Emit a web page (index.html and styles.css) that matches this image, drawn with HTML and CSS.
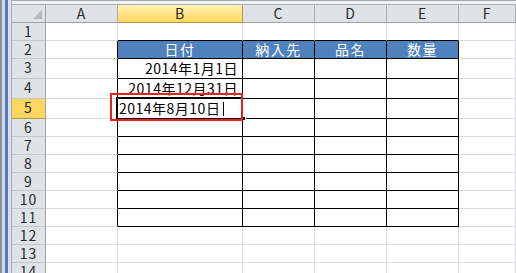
FILE: index.html
```html
<!DOCTYPE html>
<html lang="ja">
<head>
    <meta charset="UTF-8">
    <title>日付の入力</title>
    <link rel="stylesheet" href="styles.css">
</head>
<body>
    <div class="window">
        <div class="frame"></div>
        <div class="sheet">
            <div class="topbar"></div>

            <!-- 列見出し -->
            <div class="row head">
                <div class="corner"></div>
                <div class="ch">A</div>
                <div class="ch sel">B</div>
                <div class="ch">C</div>
                <div class="ch">D</div>
                <div class="ch">E</div>
                <div class="ch">F</div>
            </div>

            <div class="row">
                <div class="rh">1</div>
                <div class="c"></div>
                <div class="c tt"></div>
                <div class="c tt"></div>
                <div class="c tt"></div>
                <div class="c tt"></div>
                <div class="c"></div>
            </div>

            <!-- 表の見出し -->
            <div class="row">
                <div class="rh">2</div>
                <div class="c tl"></div>
                <div class="c t th">日付</div>
                <div class="c t th">納入先</div>
                <div class="c t th">品名</div>
                <div class="c t th">数量</div>
                <div class="c"></div>
            </div>

            <div class="row">
                <div class="rh">3</div>
                <div class="c tl"></div>
                <div class="c t num">2014年1月1日</div>
                <div class="c t"></div>
                <div class="c t"></div>
                <div class="c t"></div>
                <div class="c"></div>
            </div>

            <div class="row">
                <div class="rh">4</div>
                <div class="c tl"></div>
                <div class="c t num">2014年12月31日</div>
                <div class="c t"></div>
                <div class="c t"></div>
                <div class="c t"></div>
                <div class="c"></div>
            </div>

            <!-- 入力中のセル -->
            <div class="row">
                <div class="rh sel">5</div>
                <div class="c tl"></div>
                <div class="c t editing">
                    <span class="edit-text">2014年8月10日</span><span class="caret"></span>
                    <span class="active"></span>
                    <span class="handle"></span>
                    <span class="mark"></span>
                </div>
                <div class="c t"></div>
                <div class="c t"></div>
                <div class="c t"></div>
                <div class="c"></div>
            </div>

            <div class="row">
                <div class="rh">6</div>
                <div class="c tl"></div>
                <div class="c t"></div>
                <div class="c t"></div>
                <div class="c t"></div>
                <div class="c t"></div>
                <div class="c"></div>
            </div>

            <div class="row">
                <div class="rh">7</div>
                <div class="c tl"></div>
                <div class="c t"></div>
                <div class="c t"></div>
                <div class="c t"></div>
                <div class="c t"></div>
                <div class="c"></div>
            </div>

            <div class="row">
                <div class="rh">8</div>
                <div class="c tl"></div>
                <div class="c t"></div>
                <div class="c t"></div>
                <div class="c t"></div>
                <div class="c t"></div>
                <div class="c"></div>
            </div>

            <div class="row">
                <div class="rh">9</div>
                <div class="c tl"></div>
                <div class="c t"></div>
                <div class="c t"></div>
                <div class="c t"></div>
                <div class="c t"></div>
                <div class="c"></div>
            </div>

            <div class="row">
                <div class="rh">10</div>
                <div class="c tl"></div>
                <div class="c t"></div>
                <div class="c t"></div>
                <div class="c t"></div>
                <div class="c t"></div>
                <div class="c"></div>
            </div>

            <div class="row">
                <div class="rh">11</div>
                <div class="c tl"></div>
                <div class="c t"></div>
                <div class="c t"></div>
                <div class="c t"></div>
                <div class="c t"></div>
                <div class="c"></div>
            </div>

            <div class="row">
                <div class="rh">12</div>
                <div class="c"></div>
                <div class="c"></div>
                <div class="c"></div>
                <div class="c"></div>
                <div class="c"></div>
                <div class="c"></div>
            </div>

            <div class="row">
                <div class="rh">13</div>
                <div class="c"></div>
                <div class="c"></div>
                <div class="c"></div>
                <div class="c"></div>
                <div class="c"></div>
                <div class="c"></div>
            </div>

            <div class="row">
                <div class="rh">14</div>
                <div class="c"></div>
                <div class="c"></div>
                <div class="c"></div>
                <div class="c"></div>
                <div class="c"></div>
                <div class="c"></div>
            </div>
        </div>
    </div>
</body>
</html>
```

FILE: styles.css
```css
/* 基本 */
* {
    box-sizing: border-box;
}

body {
    margin: 0;
    background: #fff;
    overflow: hidden;
    font-family: "Noto Sans CJK JP", "Noto Sans", sans-serif;
    font-size: 14px;
    color: #000;
}

.window {
    display: flex;
    width: 516px;
    height: 273px;
    overflow: hidden;
}

/* 左側のウィンドウ枠 */
.frame {
    flex: 0 0 12px;
    background: linear-gradient(to right,
        #8b9098 0 2px,
        #d3d8df 2px 5px,
        #4f7cc4 5px 8px,
        #dde2e9 8px 11px,
        #a3a9b1 11px 12px);
}

.sheet {
    flex: 1;
    display: flex;
    flex-direction: column;
}

.topbar {
    flex: 0 0 5px;
    background: linear-gradient(to bottom,
        #a2a9b2 0 1px,
        #f1f3f6 1px 4px,
        #a9afb7 4px 5px);
}

/* 行 */
.row {
    flex: 0 0 18px;
    display: grid;
    grid-template-columns: 34px 72px 125px 72px 72px 72px 1fr;
}

.c {
    border-right: 1px solid #dadcdd;
    border-bottom: 1px solid #dadcdd;
    line-height: 17px;
    white-space: nowrap;
}

/* 見出し */
.corner,
.ch,
.rh {
    background: #dfe3e8;
    color: #2a2a2a;
    text-align: center;
    font-size: 14px;
    line-height: 17px;
    letter-spacing: 1px;
}

.corner {
    border-right: 1px solid #9ea3aa;
    border-bottom: 1px solid #9ea3aa;
    position: relative;
}

.corner::after {
    content: "";
    position: absolute;
    right: 3px;
    bottom: 3px;
    border-left: 9px solid transparent;
    border-bottom: 9px solid #b4bac2;
}

.ch {
    border-right: 1px solid #a9aeb4;
    border-bottom: 1px solid #9ea3aa;
}

.ch.sel {
    background: linear-gradient(to bottom, #fff0b4, #ffd75e);
    border-right-color: #c29343;
    border-bottom-color: #c29343;
}

.rh {
    border-right: 1px solid #9ea3aa;
    border-bottom: 1px solid #c3c7cd;
}

.rh.sel {
    background: #ffd75e;
    border-bottom-color: #c29343;
}

/* 罫線付きの表 */
.t {
    border-right-color: #000;
    border-bottom-color: #000;
}

.tl {
    border-right-color: #000;
}

.tt {
    border-bottom-color: #000;
}

.th {
    background: #4f81bd;
    color: #fff;
    text-align: center;
    letter-spacing: 1.5px;
}

.num {
    text-align: right;
    padding-right: 4px;
    line-height: 19px;
    letter-spacing: 0.5px;
}

/* 入力中 */
.editing {
    position: relative;
    line-height: 19px;
    padding-left: 1px;
    letter-spacing: 0.5px;
}

.caret {
    display: inline-block;
    width: 1px;
    height: 14px;
    margin-left: 3px;
    background: #000;
    vertical-align: -2px;
}

.active {
    position: absolute;
    left: -2px;
    top: -2px;
    right: -1px;
    bottom: -1px;
    border: 1px solid #000;
}

.handle {
    position: absolute;
    right: -4px;
    bottom: -3px;
    width: 5px;
    height: 5px;
    background: #000;
    border: 1px solid #fff;
}

.mark {
    position: absolute;
    left: -8px;
    top: -6px;
    width: 133px;
    height: 28px;
    border: 2px solid #e8201e;
}
```
